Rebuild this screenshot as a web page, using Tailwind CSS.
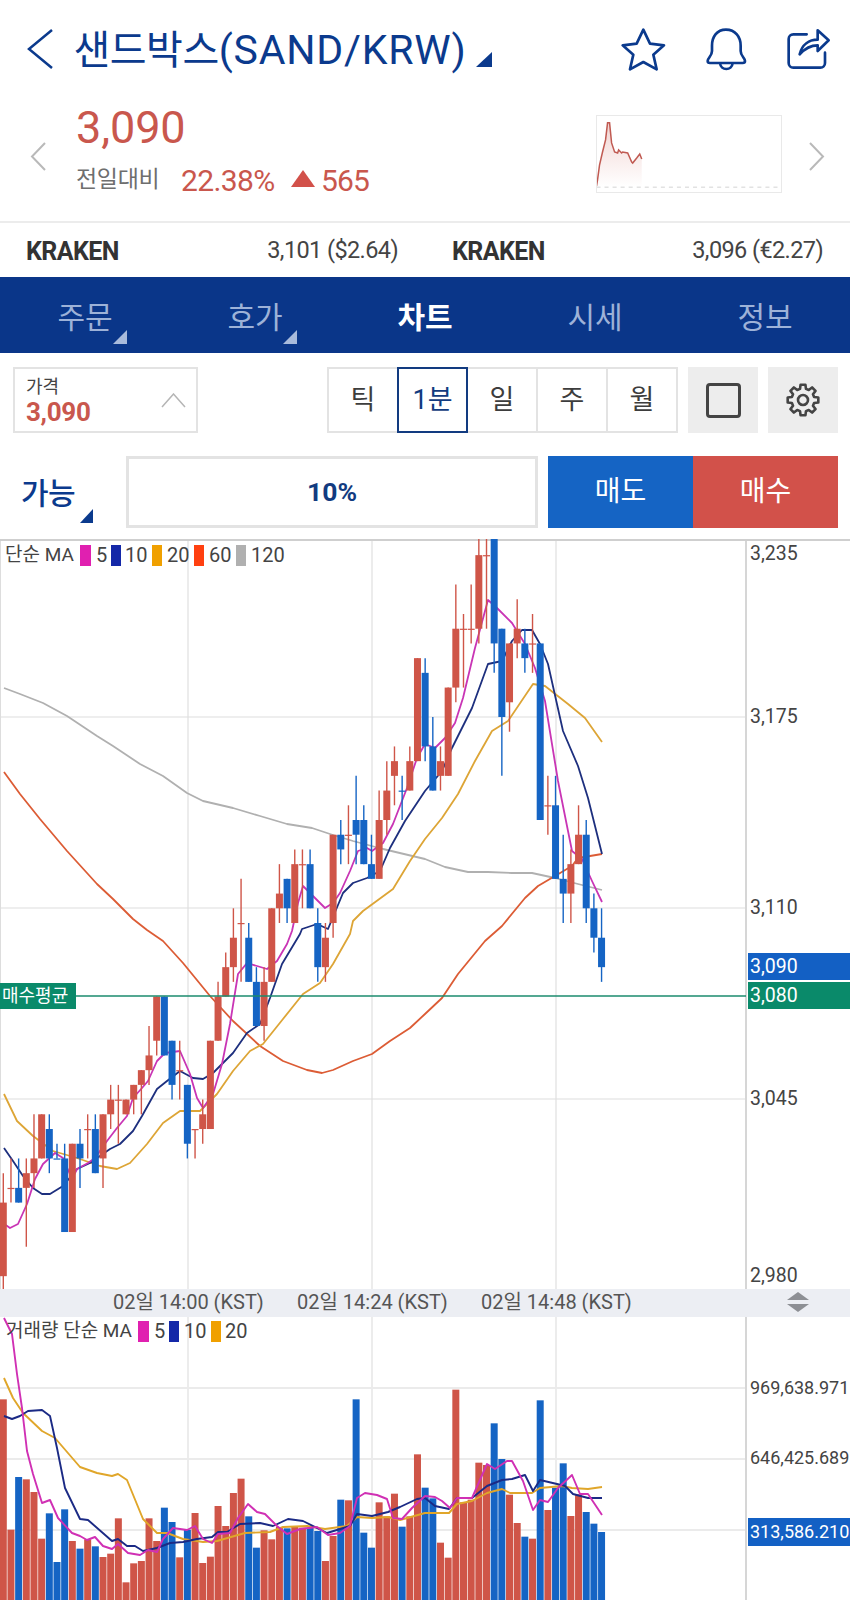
<!DOCTYPE html>
<html lang="ko">
<head>
    <meta charset="UTF-8">
    <title>샌드박스 차트</title>
    <script src="https://cdn.jsdelivr.net/npm/@tailwindcss/browser@4"></script>
</head>
<body class="bg-white font-[Roboto,'Noto_Sans_CJK_KR',sans-serif] w-[850px] h-[1600px] overflow-hidden">

    <!-- 상단 타이틀 -->
    <header class="h-[106px] flex items-start text-[#0b3a8d]">
        <svg class="ml-[26px] mt-[28px] w-[28px] h-[42px] shrink-0" viewBox="0 0 28 42" fill="none" stroke="currentColor" stroke-width="2.500"><path d="M26 2 L3 21 L26 40"/></svg>
        <h1 class="ml-[19.500px] mt-[25px] w-[397.500px] shrink-0 leading-[50px] whitespace-nowrap"><span class="text-[40px] tracking-[-0.5px]">샌드박스</span><span class="text-[41px] tracking-[0.8px]">(SAND/KRW)</span></h1>
        <div class="ml-[5px] mt-[52px] w-0 h-0 border-l-[16px] border-l-transparent border-b-[15px] border-b-[#0b3a8d]"></div>
        <svg class="ml-[128px] mt-[27px] w-[46.670px] h-[45px] shrink-0" viewBox="60 20 140 135" fill="none" stroke="currentColor" stroke-width="8" stroke-linejoin="round"><path d="M130 28 L150 70 L192 75 L160 103 L170 147 L130 125 L90 147 L100 103 L68 75 L110 70 Z"/></svg>
        <svg class="ml-[38px] mt-[27px] w-[42.330px] h-[45px] shrink-0" viewBox="315 20 127 135" fill="none" stroke="currentColor" stroke-width="8" stroke-linejoin="round"><path d="M378 28 C350 28 336 50 336 76 L336 92 C336 108 323 112 323 122 C323 126 326 128 330 128 L428 128 C432 128 435 126 435 122 C435 112 422 108 422 92 L422 76 C422 50 406 28 378 28 Z"/><path d="M360 128 C362 152 396 152 398 128"/></svg>
        <svg class="ml-[39px] mt-[27px] w-[45px] h-[43.330px] shrink-0" viewBox="560 20 135 130" fill="none" stroke="currentColor" stroke-width="8" stroke-linejoin="round" stroke-linecap="round"><path d="M622 42 L582 42 C574 42 568 48 568 56 L568 128 C568 136 574 142 582 142 L663 142 C671 142 677 136 677 128 L677 97"/><path d="M601 102 C608 72 630 58 655 58 L655 30 L688 60 L655 92 L655 75 C635 75 618 83 601 102 Z"/></svg>
    </header>

    <!-- 현재가 -->
    <section class="h-[115px] flex items-start">
        <svg class="ml-[30px] mt-[36px] w-[16px] h-[29px] shrink-0" viewBox="0 0 16 29" fill="none" stroke="#b9b9b9" stroke-width="2"><path d="M15 1 L2 14.500 L15 28"/></svg>
        <div class="ml-[30px] w-[520px]">
            <div class="text-[45px] leading-[44px] text-[#c9574d] tracking-[-0.1px]">3,090</div>
            <div class="flex items-center mt-[14px] h-[32px]">
                <span class="text-[23px] text-[#6e6e6e] tracking-[-0.3px] w-[105px]">전일대비</span>
                <span class="text-[30px] text-[#c9574d] tracking-[-0.6px] w-[110px]">22.38%</span>
                <span class="-mt-[4px] w-0 h-0 border-x-[12px] border-x-transparent border-b-[17px] border-b-[#d2514a]"></span>
                <span class="ml-[6px] text-[30px] text-[#c9574d] tracking-[-0.8px]">565</span>
            </div>
        </div>
        <svg class="mt-[9px] w-[186px] h-[78px] border-[1.500px] border-[#e9e9e9] shrink-0" viewBox="597.500 116.500 183 75">
            <defs>
                <linearGradient id="spark" x1="0" y1="0" x2="0" y2="1">
                    <stop offset="0" stop-color="#c9574d" stop-opacity="0.25"/>
                    <stop offset="1" stop-color="#c9574d" stop-opacity="0"/>
                </linearGradient>
            </defs>
            <path d="M597 186 L598 180 L600 165 L603 152 L606 140 L608 123 L610 123 L612 143 L615 152 L618 153 L619 150 L622 153 L623 152 L628 153 L632 162 L633 163 L637 158 L640 154 L642 159 L642 187 L597 187 Z" fill="url(#spark)"/>
            <path d="M597 186 L598 180 L600 165 L603 152 L606 140 L608 123 L610 123 L612 143 L615 152 L618 153 L619 150 L622 153 L623 152 L628 153 L632 162 L633 163 L637 158 L640 154 L642 159" fill="none" stroke="#c05a52" stroke-width="1.500"/>
            <path d="M597 187 L782 187" stroke="#e2e2e2" stroke-width="1.500" stroke-dasharray="4 4"/>
        </svg>
        <svg class="ml-[27px] mt-[36px] w-[16px] h-[29px] shrink-0" viewBox="0 0 16 29" fill="none" stroke="#b9b9b9" stroke-width="2"><path d="M1 1 L14 14.500 L1 28"/></svg>
    </section>

    <!-- 거래소 시세 -->
    <section class="h-[56px] pt-[3px] border-t-2 border-[#ececec] flex items-center text-[23.500px] text-[#444] tracking-[-0.6px]">
        <div class="ml-[26px] w-[372px] flex justify-between"><b class="font-bold text-[#333] text-[25px]">KRAKEN</b><span>3,101 ($2.64)</span></div>
        <div class="ml-[54px] w-[371px] flex justify-between"><b class="font-bold text-[#333] text-[25px]">KRAKEN</b><span>3,096 (€2.27)</span></div>
    </section>

    <!-- 탭 메뉴 -->
    <nav class="h-[76px] bg-[#0a3689] grid grid-cols-5 text-[30px] text-[#9db2d8]">
        <div class="relative flex items-center justify-center pt-[5px]">주문<span class="absolute left-[113px] top-[53px] w-0 h-0 border-l-[14px] border-l-transparent border-b-[14px] border-b-[#a9bbdc]"></span></div>
        <div class="relative flex items-center justify-center pt-[5px]">호가<span class="absolute left-[113px] top-[53px] w-0 h-0 border-l-[14px] border-l-transparent border-b-[14px] border-b-[#a9bbdc]"></span></div>
        <div class="flex items-center justify-center pt-[5px] font-bold text-white">차트</div>
        <div class="flex items-center justify-center pt-[5px]">시세</div>
        <div class="flex items-center justify-center pt-[5px]">정보</div>
    </nav>

    <!-- 차트 옵션 -->
    <section class="flex items-stretch h-[66px] mt-[14px] ml-[13px]">
        <div class="relative w-[185px] border-2 border-[#e3e3e3] pl-[11px]">
            <div class="text-[18px] leading-[20px] mt-[8px] text-[#444]">가격</div>
            <div class="text-[26px] leading-[26px] mt-[2px] font-bold text-[#c9574d] tracking-[-0.3px]">3,090</div>
            <svg class="absolute right-[10px] top-[24px] w-[25px] h-[15px]" viewBox="0 0 25 15" fill="none" stroke="#b5b5b5" stroke-width="1.500"><path d="M1 14 L12.500 1 L24 14"/></svg>
        </div>
        <div class="ml-[129px] flex border-2 border-[#e3e3e3] w-[351px] text-[27px] text-[#3d3d3d]">
            <div class="w-[68px] flex items-center justify-center">틱</div>
            <div class="w-[71px] -my-[2px] flex items-center justify-center border-2 border-[#123b80] text-[#123b80]">1분</div>
            <div class="w-[70px] flex items-center justify-center border-r-2 border-[#e3e3e3]">일</div>
            <div class="w-[70px] flex items-center justify-center border-r-2 border-[#e3e3e3]">주</div>
            <div class="w-[68px] flex items-center justify-center">월</div>
        </div>
        <div class="ml-[10px] w-[70px] bg-[#ededed] flex items-center justify-center">
            <div class="w-[35px] h-[35px] border-[3px] border-[#444] rounded-[4px]"></div>
        </div>
        <div class="ml-[10px] w-[70px] bg-[#ededed] flex items-center justify-center">
            <svg class="w-[36px] h-[36px]" viewBox="-18 -18 36 36" fill="none" stroke="#444" stroke-width="2.600" stroke-linejoin="round"><circle r="5"/><path id="gear"/></svg>
        </div>
    </section>

    <!-- 주문 -->
    <section class="flex items-stretch h-[72px] mt-[23px]">
        <div class="relative w-[126px] text-[30px] font-medium text-[#0b3a8d] pl-[21px] pt-[15px] tracking-[-0.5px]">가능<span class="absolute left-[80px] top-[53px] w-0 h-0 border-l-[13px] border-l-transparent border-b-[14px] border-b-[#0b3a8d]"></span></div>
        <div class="w-[412px] border-[3px] border-[#e3e3e3] flex items-center justify-center text-[26.500px] font-bold text-[#123b80]">10%</div>
        <div class="ml-[10px] w-[145px] bg-[#1564c4] text-white text-[28px] flex items-center justify-center">매도</div>
        <div class="w-[145px] bg-[#d2514a] text-white text-[28px] flex items-center justify-center">매수</div>
    </section>

    <!-- 차트 영역 -->
    <main class="relative mt-[11px] h-[1062px] border-t-2 border-[#cfcfcf] text-[#444]">
        <svg id="chart" class="absolute left-0 top-[-2px]" width="850" height="1062" viewBox="0 538 850 1062"></svg>

        <!-- 가격 차트 범례 -->
        <div class="absolute left-[5px] top-[3px] flex items-center h-[22px] text-[20px] leading-[22px]">
            <span class="w-[75px] whitespace-nowrap text-[19px]">단순 MA</span><i class="w-[11px] h-[21px] bg-[#e020b0]"></i><span class="ml-[5px] w-[15px]">5</span><i class="w-[10px] h-[21px] bg-[#1428a8]"></i><span class="ml-[4px] w-[27px]">10</span><i class="w-[10px] h-[21px] bg-[#f0a000]"></i><span class="ml-[5px] w-[27px]">20</span><i class="w-[10px] h-[21px] bg-[#ff4010]"></i><span class="ml-[5px] w-[27px]">60</span><i class="w-[10px] h-[21px] bg-[#b0b0b0]"></i><span class="ml-[5px]">120</span>
        </div>

        <!-- 가격 축 -->
        <span class="absolute left-[750px] top-[1px] text-[19.500px] leading-[24px]">3,235</span>
        <span class="absolute left-[750px] top-[164px] text-[19.500px] leading-[24px]">3,175</span>
        <span class="absolute left-[750px] top-[355px] text-[19.500px] leading-[24px]">3,110</span>
        <span class="absolute left-[748px] top-[412px] w-[102px] h-[27px] pl-[2px] bg-[#1360c4] text-white text-[19.500px] leading-[27px]">3,090</span>
        <span class="absolute left-[748px] top-[441px] w-[102px] h-[27px] pl-[2px] bg-[#0a8a6a] text-white text-[19.500px] leading-[27px]">3,080</span>
        <span class="absolute left-[750px] top-[546px] text-[19.500px] leading-[24px]">3,045</span>
        <span class="absolute left-[750px] top-[723px] text-[19.500px] leading-[24px]">2,980</span>

        <!-- 매수평균 -->
        <span class="absolute left-0 top-[442px] w-[76px] h-[26px] pl-[2px] bg-[#0a8a6a] text-white text-[18px] leading-[26px] whitespace-nowrap">매수평균</span>

        <!-- 시간 축 -->
        <div class="absolute left-0 top-[748px] w-[850px] h-[28px] bg-[#eceef3] text-[#555] text-[20px] leading-[26px]">
            <span class="absolute left-[113px] whitespace-nowrap">02일 14:00 (KST)</span>
            <span class="absolute left-[297px] whitespace-nowrap">02일 14:24 (KST)</span>
            <span class="absolute left-[481px] whitespace-nowrap">02일 14:48 (KST)</span>
            <svg class="absolute left-[787px] top-[3px] w-[22px] h-[20px]" viewBox="0 0 22 20" fill="#8d8f94"><path d="M11 0 L22 8 L0 8 Z"/><path d="M0 12 L22 12 L11 20 Z"/></svg>
        </div>

        <!-- 거래량 범례 -->
        <div class="absolute left-[6px] top-[779px] flex items-center h-[22px] text-[20px] leading-[22px]">
            <span class="w-[132px] whitespace-nowrap text-[19px]">거래량 단순 MA</span><i class="w-[11px] h-[21px] bg-[#e020b0]"></i><span class="ml-[5px] w-[15px]">5</span><i class="w-[10px] h-[21px] bg-[#1428a8]"></i><span class="ml-[5px] w-[27px]">10</span><i class="w-[10px] h-[21px] bg-[#f0a000]"></i><span class="ml-[4px]">20</span>
        </div>

        <!-- 거래량 축 -->
        <span class="absolute left-[750px] top-[835px] text-[18px] leading-[24px]">969,638.971</span>
        <span class="absolute left-[750px] top-[905px] text-[18px] leading-[24px]">646,425.689</span>
        <span class="absolute left-[748px] top-[977px] w-[102px] h-[28px] pl-[2px] bg-[#1360c4] text-white text-[18px] leading-[28px] overflow-hidden whitespace-nowrap">313,586.210</span>
    </main>

    <script>
        // 좌표 = 화면 픽셀 기준 (viewBox 가 화면과 동일)
        const svg = document.getElementById('chart');
        const RED = '#cf5548';
        const BLUE = '#1564c4';
        const STEP = 7.67;
        const priceY = p => 716 + (3175 - p) * 2.943;
        const candleX = i => 3.3 + STEP * i;

        // 설정 아이콘 톱니 8개
        const gearPts = [];
        for (let k = 0; k < 8; k++) {
            const t = k * 45;
            [[11.5, -15], [15.5, -9], [15.5, 9], [11.5, 15]].forEach(([r, d]) => {
                const a = (t + d) * Math.PI / 180;
                gearPts.push((r * Math.sin(a)).toFixed(2) + ' ' + (-r * Math.cos(a)).toFixed(2));
            });
        }
        document.getElementById('gear').setAttribute('d', 'M' + gearPts.join(' L') + ' Z');

        function add(tag, attrs) {
            const el = document.createElementNS('http://www.w3.org/2000/svg', tag);
            for (const k in attrs) el.setAttribute(k, attrs[k]);
            svg.appendChild(el);
            return el;
        }
        function grid(x1, y1, x2, y2, color, w) {
            add('line', { x1, y1, x2, y2, stroke: color, 'stroke-width': w });
        }
        function line(points, color, w) {
            add('polyline', { points: points.map(p => p.join(',')).join(' '), fill: 'none', stroke: color, 'stroke-width': w, 'stroke-linejoin': 'round' });
        }

        // 그리드
        [188, 372, 556].forEach(x => grid(x, 540, x, 1600, '#e2e2e2', 1.3));
        grid(0.5, 540, 0.5, 1288, '#dddddd', 1);
        [716, 907, 1098].forEach(y => grid(0, y, 745, y, '#dedede', 1.2));
        [1387, 1458, 1529].forEach(y => grid(0, y, 745, y, '#ebebeb', 2));
        grid(746, 540, 746, 1600, '#d6d6d6', 2);

        // 이동평균선 (가격)
        const ma120 = [[4,687],[20,693],[43,702],[67,715],[97,735],[113,745],[140,763],[163,775],[187,792],[203,800],[233,807],[260,815],[287,823],[312,827],[333,834],[353,840],[383,848],[425,858],[445,866],[468,871],[488,871],[512,872],[532,872],[555,877],[578,883],[602,889]];
        const ma60 = [[4,771],[20,793],[40,818],[67,850],[97,883],[113,898],[133,918],[147,929],[163,940],[183,962],[210,995],[233,1020],[260,1045],[283,1060],[307,1069],[322,1072],[333,1069],[353,1060],[372,1053],[390,1040],[410,1027],[425,1013],[442,997],[458,973],[485,940],[502,925],[525,897],[538,885],[555,875],[572,865],[578,857],[602,853]];
        const ma20 = [[4,1093],[17,1120],[33,1135],[53,1150],[77,1157],[100,1165],[117,1168],[130,1162],[147,1143],[163,1122],[180,1110],[200,1110],[217,1093],[233,1070],[250,1050],[263,1043],[283,1018],[303,993],[320,982],[333,963],[350,933],[353,920],[363,910],[393,888],[410,860],[425,838],[442,817],[458,793],[475,760],[492,730],[508,720],[533,683],[545,685],[568,703],[585,717],[602,741]];
        const ma10 = [[4,1147],[13,1160],[23,1175],[33,1187],[42,1193],[50,1193],[63,1185],[77,1168],[90,1162],[110,1148],[120,1143],[133,1130],[142,1115],[157,1088],[167,1080],[180,1070],[193,1077],[203,1078],[213,1072],[233,1052],[247,1032],[260,1023],[270,997],[282,963],[300,933],[302,928],[317,923],[328,928],[343,892],[353,882],[367,877],[380,870],[390,847],[405,820],[425,790],[442,770],[452,747],[472,707],[488,663],[502,660],[512,640],[522,629],[532,629],[540,643],[548,663],[563,730],[578,765],[588,797],[602,853]];
        const ma5 = [[0,1220],[10,1227],[18,1223],[27,1203],[35,1178],[43,1163],[55,1152],[63,1157],[72,1178],[77,1168],[88,1162],[95,1157],[107,1140],[117,1127],[127,1115],[133,1097],[142,1087],[148,1080],[157,1060],[165,1052],[180,1050],[190,1073],[197,1097],[203,1107],[213,1093],[222,1063],[230,1023],[238,973],[247,962],[257,965],[267,968],[277,960],[287,943],[292,930],[298,902],[303,885],[315,897],[325,907],[333,902],[340,892],[350,870],[358,850],[367,847],[372,850],[383,842],[393,823],[407,787],[417,757],[425,743],[435,747],[445,737],[455,722],[463,697],[475,647],[488,599],[497,607],[512,622],[525,643],[535,667],[545,700],[558,780],[572,850],[582,858],[592,880],[602,901]];
        line(ma120, '#b0b0b0', 1.8);
        line(ma60, '#dc5c35', 1.8);
        line(ma20, '#dda536', 1.8);
        line(ma10, '#1d2f7e', 1.8);
        line(ma5, '#c935b5', 1.8);

        // 캔들: [색, 몸통 위, 몸통 아래, 고가, 저가]
        const candles = [
            ['r',3010,2985,3020,2980],['r',3015,3015,3025,3010],['b',3015,3010,3025,3010],['r',3020,3015,3025,2995],
            ['r',3025,3020,3040,3015],['r',3040,3025,3040,3025],['b',3035,3025,3040,3020],['b',3025,3025,3030,3025],
            ['b',3025,3000,3030,3000],['r',3030,3000,3030,3000],['b',3030,3025,3035,3015],['r',3035,3035,3040,3025],
            ['b',3035,3020,3040,3020],['r',3040,3025,3040,3015],['r',3045,3040,3050,3035],['r',3045,3045,3050,3030],
            ['r',3045,3040,3045,3040],['r',3050,3045,3050,3040],['r',3055,3050,3055,3040],['r',3060,3055,3070,3050],
            ['r',3080,3065,3080,3060],['b',3080,3060,3080,3060],['b',3065,3050,3065,3045],['r',3055,3055,3065,3045],
            ['b',3050,3030,3050,3025],['r',3035,3035,3035,3025],['r',3040,3035,3045,3030],['r',3065,3035,3065,3035],
            ['r',3080,3065,3085,3065],['r',3090,3080,3095,3080],['r',3100,3090,3110,3085],['r',3105,3105,3120,3085],
            ['b',3100,3085,3105,3085],['b',3085,3070,3090,3070],['r',3085,3070,3090,3065],['r',3110,3085,3110,3085],
            ['r',3115,3110,3125,3105],['b',3120,3110,3120,3105],['r',3125,3105,3130,3105],['r',3125,3125,3130,3110],
            ['b',3125,3110,3130,3110],['b',3105,3090,3110,3085],['r',3100,3090,3105,3085],['r',3135,3105,3135,3100],
            ['b',3135,3130,3140,3125],['r',3135,3135,3145,3125],['b',3140,3135,3155,3125],['b',3140,3125,3145,3125],
            ['b',3125,3120,3135,3120],['r',3140,3120,3150,3120],['r',3150,3140,3160,3135],['r',3160,3155,3165,3145],
            ['b',3150,3150,3155,3140],['r',3160,3150,3165,3150],['r',3195,3160,3195,3160],['b',3190,3165,3195,3160],
            ['b',3165,3150,3175,3150],['r',3160,3155,3165,3150],['r',3185,3155,3185,3155],['r',3205,3185,3220,3180],
            ['r',3205,3205,3210,3185],['r',3205,3205,3220,3200],['r',3230,3205,3237,3200],['r',3230,3230,3237,3205],
            ['b',3237,3200,3237,3190],['b',3205,3175,3205,3155],['r',3200,3180,3200,3170],['r',3205,3200,3215,3195],
            ['b',3200,3195,3205,3190],['r',3200,3200,3210,3190],['b',3200,3140,3200,3140],['r',3145,3145,3155,3135],
            ['b',3145,3120,3155,3120],['b',3120,3115,3135,3105],['r',3125,3115,3130,3105],['r',3135,3125,3145,3125],
            ['b',3135,3110,3140,3105],['b',3110,3100,3115,3095],['b',3100,3090,3110,3085]
        ];
        candles.forEach((c, i) => {
            const x = candleX(i);
            const color = c[0] === 'r' ? RED : BLUE;
            const top = priceY(c[1]);
            const h = Math.max(priceY(c[2]) - top, 1.2);
            grid(x, priceY(c[3]), x, priceY(c[4]), color, 1.4);
            add('rect', { x: x - 3.5, y: top, width: 7, height: h, fill: color });
        });

        // 매수평균선
        grid(0, 995, 746, 995, '#1b8b6e', 1.6);

        // 거래량
        const vol = [
            ['r',325],['r',716],['b',558],['r',565],['r',603],['r',743],['b',667],['b',813],['b',655],['r',750],
            ['b',773],['r',745],['b',766],['r',798],['r',788],['r',682],['r',874],['r',817],['r',810],['r',682],
            ['r',750],['b',650],['b',693],['r',799],['b',716],['r',666],['r',816],['r',797],['r',645],['r',705],
            ['r',606],['r',563],['b',676],['b',770],['r',718],['r',745],['r',708],['b',712],['r',708],['r',710],
            ['b',710],['b',720],['r',810],['r',735],['b',626],['r',628],['b',325],['b',725],['b',770],['r',634],
            ['r',676],['r',608],['b',707],['r',676],['r',490],['b',590],['b',622],['r',755],['r',800],['r',296],
            ['r',634],['r',626],['r',515],['r',522],['b',397],['b',504],['r',611],['r',696],['b',737],['r',743],
            ['b',328],['r',657],['b',590],['b',517],['r',675],['r',610],['b',663],['b',698],['b',723]
        ];
        vol.forEach((v, i) => {
            const y = 1290 + v[1] / 3;
            add('rect', { x: candleX(i) - 3.5, y, width: 7, height: 1600 - y, fill: v[0] === 'r' ? RED : BLUE });
        });

        // 이동평균선 (거래량)
        const vma20 = [[4,1377],[13,1397],[23,1412],[42,1430],[55,1437],[80,1466],[97,1472],[112,1475],[118,1473],[127,1479],[143,1518],[157,1532],[167,1532],[183,1538],[203,1541],[217,1540],[245,1532],[270,1531],[283,1526],[307,1525],[325,1528],[347,1525],[357,1516],[372,1517],[388,1516],[400,1519],[425,1512],[449,1512],[457,1503],[472,1500],[487,1492],[502,1488],[510,1492],[532,1492],[540,1487],[562,1485],[572,1487],[588,1488],[602,1486]];
        const vma10 = [[4,1415],[12,1418],[20,1415],[28,1410],[42,1409],[50,1415],[57,1447],[65,1487],[80,1518],[88,1519],[112,1540],[118,1538],[127,1545],[135,1545],[143,1550],[157,1547],[170,1542],[183,1541],[197,1538],[212,1536],[218,1531],[227,1531],[240,1523],[260,1522],[273,1525],[288,1518],[303,1520],[327,1532],[350,1525],[357,1513],[372,1515],[388,1511],[400,1506],[417,1498],[425,1497],[435,1505],[449,1508],[457,1497],[472,1497],[487,1485],[502,1479],[512,1478],[525,1474],[533,1490],[540,1479],[557,1483],[565,1485],[573,1493],[588,1497],[602,1497]];
        const vma5 = [[4,1317],[12,1333],[17,1373],[22,1407],[27,1450],[33,1473],[42,1502],[50,1499],[58,1517],[72,1532],[80,1535],[87,1539],[95,1536],[103,1545],[112,1548],[118,1543],[128,1552],[140,1554],[148,1549],[157,1551],[163,1538],[173,1527],[187,1529],[195,1525],[203,1538],[212,1542],[218,1533],[230,1532],[238,1517],[248,1503],[257,1511],[265,1513],[277,1525],[287,1533],[300,1528],[317,1526],[328,1534],[340,1532],[350,1525],[357,1497],[365,1492],[377,1494],[387,1498],[393,1517],[402,1518],[412,1507],[425,1495],[435,1496],[442,1500],[450,1507],[457,1497],[472,1497],[487,1463],[495,1468],[507,1460],[512,1460],[523,1480],[533,1509],[540,1499],[548,1501],[558,1487],[572,1474],[580,1493],[588,1493],[602,1514]];
        line(vma20, '#e0a62a', 1.9);
        line(vma10, '#1b2a85', 1.9);
        line(vma5, '#d030b4', 1.9);
    </script>
</body>
</html>
